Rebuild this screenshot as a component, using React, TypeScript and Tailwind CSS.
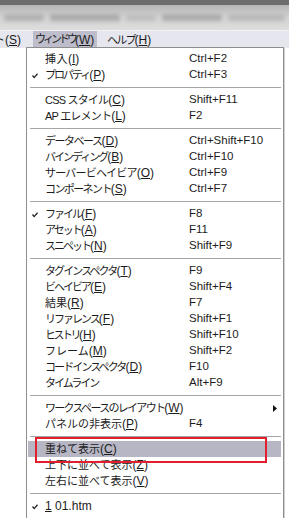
import React from 'react';

type Item =
  | { sep: true }
  | {
      sep?: false;
      label: string;
      tr?: string;
      key?: string;
      tail?: string;
      shortcut?: string;
      checked?: boolean;
      sub?: boolean;
      active?: boolean;
    };

// tr = letter spacing for the label, the original font has narrow kana
const items: Item[] = [
  { label: '挿入', tr: 'tracking-[0.5px]', key: 'I', shortcut: 'Ctrl+F2' },
  { label: 'プロパティ', tr: 'tracking-[-2px]', key: 'P', shortcut: 'Ctrl+F3', checked: true },
  { sep: true },
  { label: 'CSS スタイル', tr: 'tracking-[-0.8px]', key: 'C', shortcut: 'Shift+F11' },
  { label: 'AP エレメント', tr: 'tracking-[-0.8px]', key: 'L', shortcut: 'F2' },
  { sep: true },
  { label: 'データベース', tr: 'tracking-[-1.5px]', key: 'D', shortcut: 'Ctrl+Shift+F10' },
  { label: 'バインディング', tr: 'tracking-[-2px]', key: 'B', shortcut: 'Ctrl+F10' },
  { label: 'サーバービヘイビア', tr: 'tracking-[-0.8px]', key: 'O', shortcut: 'Ctrl+F9' },
  { label: 'コンポーネント', tr: 'tracking-[-1.6px]', key: 'S', shortcut: 'Ctrl+F7' },
  { sep: true },
  { label: 'ファイル', tr: 'tracking-[-2px]', key: 'F', shortcut: 'F8', checked: true },
  { label: 'アセット', tr: 'tracking-[-2px]', key: 'A', shortcut: 'F11' },
  { label: 'スニペット', tr: 'tracking-[-2px]', key: 'N', shortcut: 'Shift+F9' },
  { sep: true },
  { label: 'タグインスペクタ', tr: 'tracking-[-1.9px]', key: 'T', shortcut: 'F9' },
  { label: 'ビヘイビア', tr: 'tracking-[-2px]', key: 'E', shortcut: 'Shift+F4' },
  { label: '結果', tr: 'tracking-[0px]', key: 'R', shortcut: 'F7' },
  { label: 'リファレンス', tr: 'tracking-[-2px]', key: 'F', shortcut: 'Shift+F1' },
  { label: 'ヒストリ', tr: 'tracking-[-2.5px]', key: 'H', shortcut: 'Shift+F10' },
  { label: 'フレーム', tr: 'tracking-[0px]', key: 'M', shortcut: 'Shift+F2' },
  { label: 'コードインスペクタ', tr: 'tracking-[-1.9px]', key: 'D', shortcut: 'F10' },
  { label: 'タイムライン', tr: 'tracking-[-2px]', shortcut: 'Alt+F9' },
  { sep: true },
  { label: 'ワークスペースのレイアウト', tr: 'tracking-[-1.7px]', key: 'W', sub: true },
  { label: 'パネルの非表示', tr: 'tracking-[0px]', key: 'P', shortcut: 'F4' },
  { sep: true },
  { label: '重ねて表示', tr: 'tracking-[0px]', key: 'C', active: true },
  { label: '上下に並べて表示', tr: 'tracking-[0px]', key: 'Z' },
  { label: '左右に並べて表示', tr: 'tracking-[0px]', key: 'V' },
  { sep: true },
  { label: '', key: '1', tail: ' 01.htm', checked: true },
];

function Check() {
  return (
    <svg width="6" height="6" viewBox="0 0 6 6" className="absolute left-[4px] top-[6px]">
      <path d="M0.5 2.5 L2.2 4.6 L5.5 0.8" fill="none" stroke="#222" strokeWidth="1.3" />
    </svg>
  );
}

function Row({ item }: { item: Exclude<Item, { sep: true }> }) {
  const bg = item.active ? 'bg-[#b7b6c4]' : '';
  const isFile = item.label === '';
  return (
    <div className={`relative flex h-[16px] items-center ml-[1px] mr-[2px] ${bg}`}>
      {item.checked && <Check />}
      <div className="pl-[17px] w-[161px] whitespace-nowrap leading-none">
        {isFile ? (
          <>
            <span className="underline">{item.key}</span>
            {item.tail}
          </>
        ) : (
          <>
            <span className={`text-[11px] ${item.tr}`}>{item.label}</span>
            {item.key && (
              <>
                (<span className="underline">{item.key}</span>)
              </>
            )}
          </>
        )}
      </div>
      {item.shortcut && <div className="whitespace-nowrap leading-none text-[11.5px]">{item.shortcut}</div>}
      {item.sub && (
        <svg width="4" height="7" viewBox="0 0 4 7" className="absolute right-[4px] top-[5px]">
          <path d="M0 0 L4 3.5 L0 7 Z" fill="#111" />
        </svg>
      )}
    </div>
  );
}

export default function App() {
  return (
    <div className="relative w-[289px] h-[518px] overflow-hidden bg-white text-[12px] text-[#1c1c1c] font-['Liberation_Sans','Noto_Sans_CJK_JP',sans-serif]">
      {/* blurred title bar */}
      <div className="h-[5px] bg-[#6c6c6c]" />
      <div className="relative h-[25px] bg-gradient-to-b from-[#b4b4b4] via-[#d6d6d6] to-[#dcdcdc] overflow-hidden">
        <div className="absolute left-[4px] right-[4px] top-[9px] h-[7px] flex gap-[6px] blur-[2px]">
          <div className="w-[40px] bg-[#b0b0b0]" />
          <div className="w-[70px] bg-[#a9a9a9]" />
          <div className="w-[30px] bg-[#bdbdbd]" />
          <div className="w-[60px] bg-[#ababab]" />
          <div className="flex-1 bg-[#b8b8b8]" />
        </div>
      </div>
      {/* menu bar */}
      <div className="h-[1px] bg-[#f2f2f2]" />
      <div className="flex h-[17px] items-center bg-[#e6e6ee] whitespace-nowrap leading-none">
        <div className="-ml-[6px] w-[39px] shrink-0">
          <span className="text-[11px]">ト</span>(<span className="underline">S</span>)
        </div>
        <div className="flex h-full w-[64px] shrink-0 items-center bg-[#bebdcc] pl-[2px]">
          <span className="text-[11px] tracking-[-3px]">ウィンドウ</span>(<span className="underline">W</span>)
        </div>
        <div className="pl-[10px]">
          <span className="text-[11px] tracking-[-1.8px]">ヘルプ</span>(<span className="underline">H</span>)
        </div>
      </div>

      {/* dropdown */}
      <div className="absolute left-[26px] top-[47px] w-[258px] h-[480px] border border-[#8e8e8e] bg-white pt-[3px] shadow-[1px_1px_0_#d0d0d0]">
        {items.map((it, i) =>
          it.sep ? (
            <div key={i} className="flex h-[9px] items-center ml-[3px] mr-[2px]">
              <div className="w-full border-t border-[#a6a6a6] border-b border-b-white" />
            </div>
          ) : (
            <Row key={i} item={it} />
          ),
        )}
      </div>

      {/* red callout */}
      <div className="absolute left-[35px] top-[437px] w-[232px] h-[26px] border-2 border-[#e0202c]" />
    </div>
  );
}
